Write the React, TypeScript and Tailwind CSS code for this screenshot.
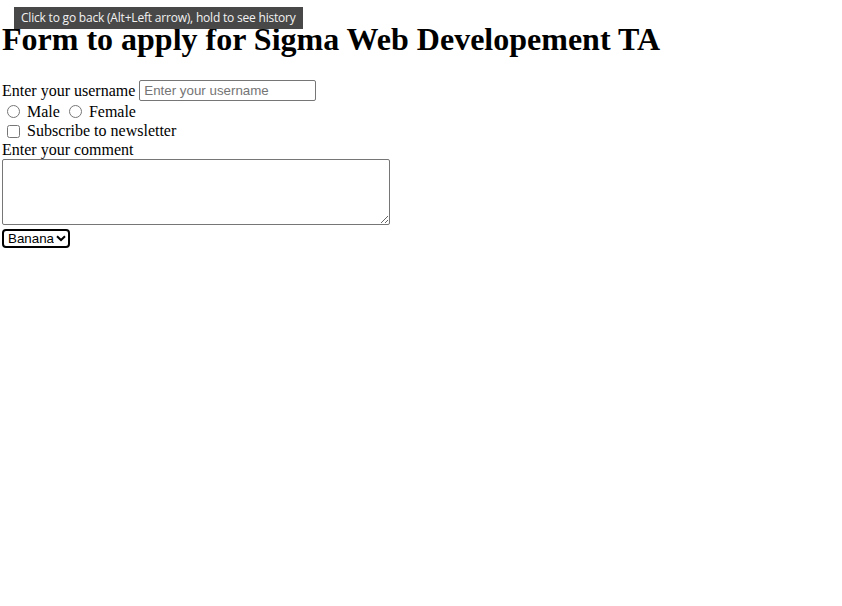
import React from "react";

export default function App() {
  return (
    <div className="relative min-h-[606px] w-[842px] bg-white text-black px-[2px] font-['Liberation_Serif',serif] text-[16px]">
      <h1 className="pt-[21px] mb-[22px] text-[32px] font-bold leading-[37px]">
        Form to apply for Sigma Web Developement TA
      </h1>
      <div className="flex items-center h-[21px] leading-[18px]">
        <span>Enter your username</span>
        <input
          type="text"
          placeholder="Enter your username"
          className="ml-[4px] w-[177px] h-[21px] border border-[#767676] rounded-[2px] px-[4px] font-['Liberation_Sans',sans-serif] text-[13.33px] placeholder:text-[#757575] outline-none"
        />
      </div>
      <div className="flex items-center h-[20px] leading-[18px]">
        <input type="radio" name="g" className="ml-[5px] mr-[3px] mt-[1px] w-[13px] h-[13px]" />
        <span className="ml-[4px] mt-[1px]">Male</span>
        <input type="radio" name="g" className="ml-[9px] mr-[3px] mt-[1px] w-[13px] h-[13px]" />
        <span className="ml-[4px] mt-[1px]">Female</span>
      </div>
      <div className="flex items-center h-[20px] leading-[18px]">
        <input type="checkbox" className="ml-[5px] mr-[3px] mt-0 w-[13px] h-[13px]" />
        <span className="ml-[4px]">Subscribe to newsletter</span>
      </div>
      <div className="h-[18px] leading-[18px]">Enter your comment</div>
      <textarea className="block w-[388px] h-[66px] border border-[#767676] rounded-[2px] resize-y outline-none" />
      <div className="mt-[4px] relative w-[68px] h-[19px]">
        <select
          defaultValue="Banana"
          className="block appearance-none w-[68px] h-[19px] border-2 border-black rounded-[4px] pl-[4px] pr-[14px] font-['Liberation_Sans',sans-serif] text-[13.33px] leading-[15px] outline-none bg-white"
        >
          <option>Apple</option>
          <option>Banana</option>
          <option>Cherry</option>
        </select>
        <svg
          className="absolute right-[4px] top-[6px] pointer-events-none"
          width="10"
          height="7"
          viewBox="0 0 10 7"
        >
          <path d="M1 1.2 L5 5 L9 1.2" fill="none" stroke="black" strokeWidth="2" />
        </svg>
      </div>
      <div className="absolute left-[14px] top-[7px] w-[289px] h-[22px] bg-[#484848] text-[#f2f2f2] text-[12px] font-['Open_Sans',sans-serif] flex items-center pl-[7px] whitespace-nowrap tracking-[-0.2px]">
        Click to go back (Alt+Left arrow), hold to see history
      </div>
    </div>
  );
}
